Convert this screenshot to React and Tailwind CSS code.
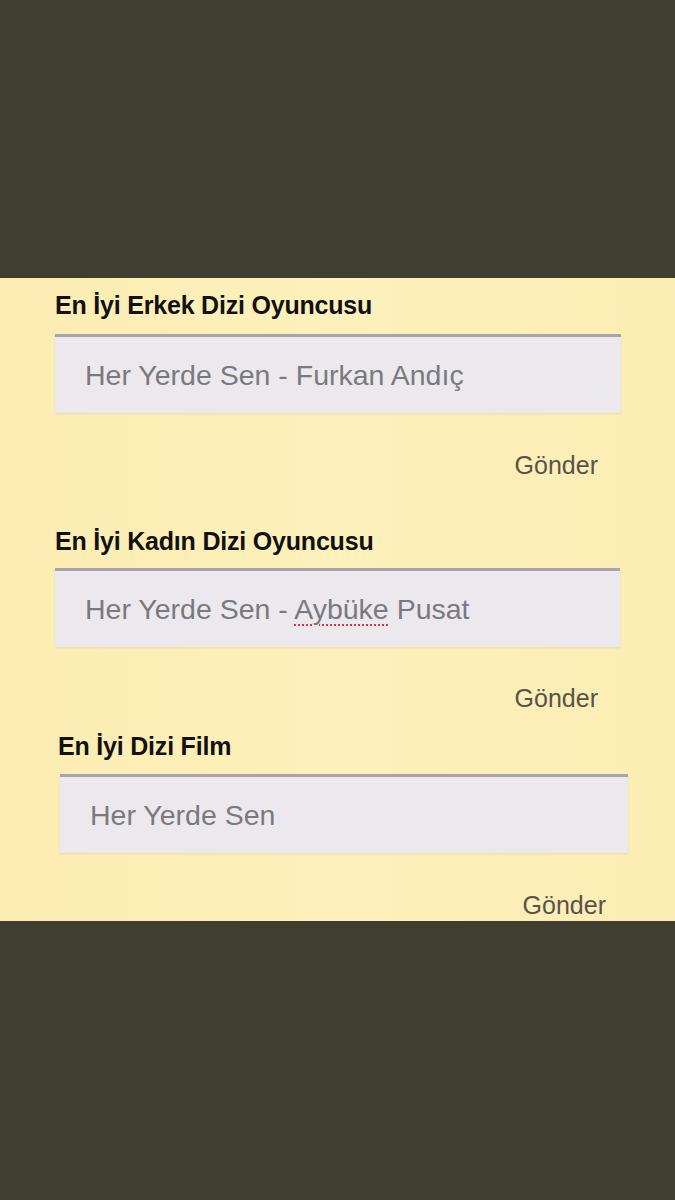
export default function App() {
  const font = { fontFamily: '"Liberation Sans", Arial, sans-serif' };

  const Title = ({ children, className = "" }) => (
    <div className={`h-[30px] leading-[30px] text-[25px] font-bold text-[#111] tracking-[-0.2px] ${className}`}>
      {children}
    </div>
  );

  const Field = ({ children, className = "" }) => (
    <div
      className={`h-[79px] bg-[#ebe9ee] border-t-[3px] border-[#a7a5ab] shadow-[0_1px_2px_rgba(0,0,0,0.08)] flex items-center pl-[30px] text-[28.5px] text-[#7a797e] ${className}`}
    >
      {children}
    </div>
  );

  const Send = ({ className = "" }) => (
    <div className={`h-[30px] leading-[30px] text-[25px] text-[#57534c] text-right ${className}`}>
      Gönder
    </div>
  );

  return (
    <div className="w-[675px] h-[1200px] bg-[#403d31] flex flex-col" style={font}>
      <div className="h-[278px]" />
      <div className="h-[643px] bg-gradient-to-r from-[#fcecb2] via-[#fdf0ba] to-[#fcedb4] flex flex-col">
        <Title className="mt-[12px] ml-[55px]">En İyi Erkek Dizi Oyuncusu</Title>
        <Field className="mt-[14px] ml-[55px] w-[566px]">Her Yerde Sen - Furkan Andıç</Field>
        <Send className="mt-[37px] w-[598px]" />

        <Title className="mt-[46px] ml-[55px]">En İyi Kadın Dizi Oyuncusu</Title>
        <Field className="mt-[12px] ml-[55px] w-[565px]">
          <span>
            Her Yerde Sen -{" "}
            <span className="underline decoration-dotted decoration-[#e0303a] decoration-2 underline-offset-[6px]">
              Aybüke
            </span>{" "}
            Pusat
          </span>
        </Field>
        <Send className="mt-[36px] w-[598px]" />

        <Title className="mt-[18px] ml-[58px]">En İyi Dizi Film</Title>
        <Field className="mt-[13px] ml-[60px] w-[568px]">Her Yerde Sen</Field>
        <Send className="mt-[37px] w-[606px]" />
      </div>
      <div className="flex-1" />
    </div>
  );
}
